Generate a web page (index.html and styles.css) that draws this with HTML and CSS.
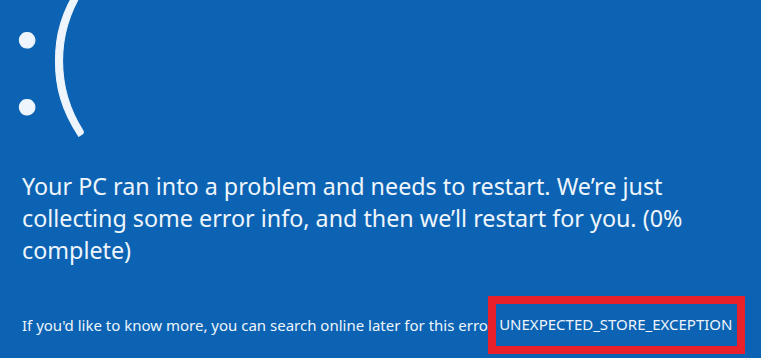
FILE: index.html
```html
<!DOCTYPE html>
<html lang="en">
<head>
<meta charset="utf-8">
<title>Blue screen</title>
<link rel="stylesheet" href="styles.css">
</head>
<body>
<main class="screen">
  <div class="face">:(</div>
  <p class="message">Your PC ran into a problem and needs to restart. We’re just collecting some error info, and then we’ll restart for you. (0% complete)</p>
  <div class="more">
    <span class="more-text">If you'd like to know more, you can search online later for this error:</span>
    <span class="code">UNEXPECTED_STORE_EXCEPTION</span>
  </div>
</main>
</body>
</html>
```
FILE: styles.css
```css
html, body {
  margin: 0;
  padding: 0;
  height: 100%;
  background: #0c63b3;
  overflow: hidden;
}
.screen {
  box-sizing: border-box;
  height: 358px;
  padding: 0 0 0 22px;
  color: #eef5fc;
  font-family: "Noto Sans", "Open Sans", sans-serif;
}
.face {
  font-family: "Lato", "Open Sans", sans-serif;
  font-weight: 300;
  font-size: 168px;
  line-height: 168px;
  height: 205px;
  margin-top: -35px;
  margin-left: -15px;
  letter-spacing: -1px;
  -webkit-text-stroke: 1px #eef5fc;
}
.message {
  margin: 0;
  width: 690px;
  font-size: 23.3px;
  line-height: 32px;
}
.more {
  display: flex;
  align-items: center;
  margin-top: 30px;
  font-size: 15px;
  white-space: nowrap;
}
.code {
  margin-left: -10px;
  border: 8px solid #e8202a;
  padding: 10px 5px 12px 3px;
  background: #0c63b3;
}
```
